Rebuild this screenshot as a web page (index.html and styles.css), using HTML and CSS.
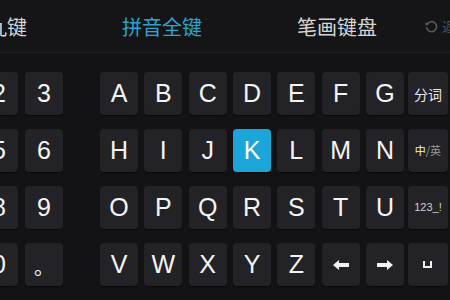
FILE: index.html
```html
<!DOCTYPE html>
<html lang="zh">
<head>
<meta charset="utf-8">
<link rel="stylesheet" href="styles.css">
</head>
<body>
<div class="screen">
  <div class="topbar">
    <span class="tab">九键</span>
    <span class="tab active">拼音全键</span>
    <span class="tab">笔画键盘</span>
    <span class="restore">
      <svg class="restore-icon" width="13" height="13" viewBox="0 0 13 13">
        <path d="M2.2 4.2 A5 5 0 1 1 1.6 7.4" fill="none" stroke="#5a5a5e" stroke-width="1.6"/>
        <path d="M0.6 1.8 L3.6 4.8 L0.4 5.4 Z" fill="#5a5a5e"/>
      </svg>
      <span>返回</span>
    </span>
  </div>
  <div class="keyboard">
    <div class="numpad">
      <div class="key">2</div><div class="key">3</div>
      <div class="key">5</div><div class="key">6</div>
      <div class="key">8</div><div class="key">9</div>
      <div class="key">0</div><div class="key dot">。</div>
    </div>
    <div class="letters">
      <div class="key">A</div><div class="key">B</div><div class="key">C</div><div class="key">D</div><div class="key">E</div><div class="key">F</div><div class="key">G</div>
      <div class="key">H</div><div class="key">I</div><div class="key">J</div><div class="key active">K</div><div class="key">L</div><div class="key">M</div><div class="key">N</div>
      <div class="key">O</div><div class="key">P</div><div class="key">Q</div><div class="key">R</div><div class="key">S</div><div class="key">T</div><div class="key">U</div>
      <div class="key">V</div><div class="key">W</div><div class="key">X</div><div class="key">Y</div><div class="key">Z</div>
      <div class="key">
        <svg width="16" height="10" viewBox="0 0 16 10"><path d="M0 5 L6 0 L6 3 L16 3 L16 7 L6 7 L6 10 Z" fill="#f2f2f2"/></svg>
      </div>
      <div class="key">
        <svg width="16" height="10" viewBox="0 0 16 10"><path d="M16 5 L10 0 L10 3 L0 3 L0 7 L10 7 L10 10 Z" fill="#f2f2f2"/></svg>
      </div>
    </div>
    <div class="funcs">
      <div class="key fn fn-cut">分词</div>
      <div class="key fn fn-lang"><span class="main">中</span><span class="dim">/英</span></div>
      <div class="key fn fn-sym">123_!</div>
      <div class="key fn">
        <svg width="9" height="7" viewBox="0 0 9 7"><path d="M1 0 V6 H8 V0" fill="none" stroke="#f0f0f0" stroke-width="2"/></svg>
      </div>
    </div>
  </div>
</div>
</body>
</html>
```
FILE: styles.css
```css
html, body {
  margin: 0;
  padding: 0;
  background: #131315;
  overflow: hidden;
}

.screen {
  width: 450px;
  height: 300px;
  overflow: hidden;
  background: #131315;
  font-family: "Liberation Sans", Arial, sans-serif;
}

.topbar {
  height: 52px;
  display: flex;
  align-items: center;
  margin-left: -13px;
  border-bottom: 1px solid #202023;
  background: #151517;
  font-family: "Noto Sans CJK SC", "Noto Sans", sans-serif;
  font-size: 20px;
  color: #d6d6d6;
  white-space: nowrap;
}

.tab + .tab {
  margin-left: 95px;
}

.tab.active {
  color: #2ba5d0;
}

.restore {
  display: flex;
  align-items: center;
  gap: 4px;
  margin-left: 48px;
  font-size: 14px;
  color: #4e4e52;
}

.restore-icon {
  display: block;
}

.keyboard {
  display: flex;
  margin-top: 19px;
}

.numpad {
  display: grid;
  grid-template-columns: 38px 38px;
  grid-auto-rows: 43px;
  column-gap: 7px;
  row-gap: 14px;
  margin-left: -20px;
}

.letters {
  display: grid;
  grid-template-columns: repeat(7, 38px);
  grid-auto-rows: 43px;
  column-gap: 6.33px;
  row-gap: 14px;
  margin-left: 37px;
}

.funcs {
  display: grid;
  grid-template-columns: 40px;
  grid-auto-rows: 43px;
  row-gap: 14px;
  margin-left: 4px;
}

.key {
  display: flex;
  align-items: center;
  justify-content: center;
  background: #232327;
  border-radius: 4px;
  color: #f4f4f4;
  font-size: 25px;
  line-height: 1;
  box-shadow: 0 1px 1px rgba(0, 0, 0, 0.5);
}

.key.active {
  background: #1ba6da;
  color: #ffffff;
}

.key.dot {
  font-family: "Noto Sans CJK SC", sans-serif;
  font-size: 20px;
  padding-top: 4px;
  box-sizing: border-box;
}

.fn {
  font-family: "Noto Sans CJK SC", "Liberation Sans", sans-serif;
  color: #e8e8e8;
}

.fn-cut {
  font-size: 14px;
}

.fn-lang {
  font-size: 11px;
}

.fn-lang .main {
  color: #f0f0f0;
}

.fn-lang .dim {
  color: #9a9a9e;
}

.fn-sym {
  font-family: "Liberation Sans", Arial, sans-serif;
  font-size: 11px;
  color: #d0d0d0;
}
```
